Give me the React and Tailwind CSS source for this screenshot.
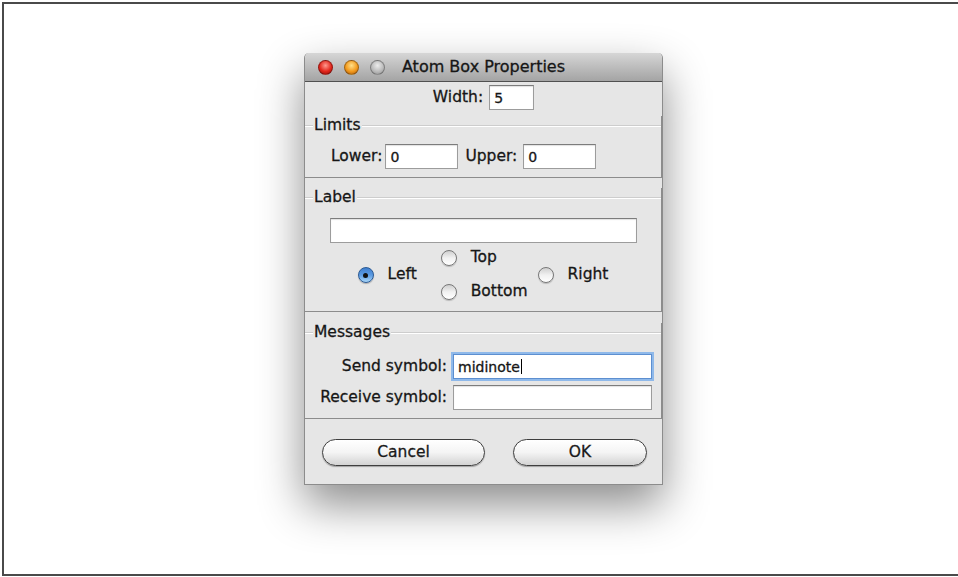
import React from 'react';

const Field = ({ width, children, focused }) => (
  <div
    className={
      'flex h-[25px] items-center bg-white pl-[4px] text-[14px] leading-none ' +
      (focused
        ? 'border border-[#5d8fd0] shadow-[0_0_0_2px_#8fb9ea]'
        : 'border border-[#9c9c9c] border-t-[#7c7c7c] shadow-[inset_0_1px_1px_rgba(0,0,0,0.12)]')
    }
    style={{ width }}
  >
    {children}
  </div>
);

const Radio = ({ checked }) =>
  checked ? (
    <span className="flex h-[16px] w-[16px] shrink-0 items-center justify-center rounded-full border border-[#2b5a94] bg-gradient-to-b from-[#3f7fcf] via-[#5b9ae2] to-[#a9d6f8] shadow-[0_1px_1px_rgba(0,0,0,0.25)]">
      <span className="h-[5px] w-[5px] rounded-full bg-[#111]" />
    </span>
  ) : (
    <span className="h-[16px] w-[16px] shrink-0 rounded-full border border-[#777] bg-gradient-to-b from-[#cfcfcf] via-[#f1f1f1] to-[#ffffff] shadow-[0_1px_1px_rgba(0,0,0,0.2)]" />
  );

const Option = ({ checked, label }) => (
  <div className="flex h-[22px] items-center gap-[14px]">
    <Radio checked={checked} />
    <span>{label}</span>
  </div>
);

// labelframe heading: title with the groove running to the right edge
const GroupTitle = ({ title, className }) => (
  <div className={'flex h-[20px] items-center ' + className}>
    <div className="h-[2px] w-[8px] border-t border-[#cdcdcd] bg-white" />
    <span className="px-[1px]">{title}</span>
    <div className="h-[2px] flex-1 border-t border-[#cdcdcd] bg-white" />
  </div>
);

const Button = ({ width, children }) => (
  <button
    className="flex h-[27px] items-center justify-center rounded-full border border-[#3e3e3e] bg-gradient-to-b from-[#ffffff] via-[#f4f4f4] to-[#d3d3d3] shadow-[0_1px_1px_rgba(0,0,0,0.3)] text-[15.5px] text-[#1a1a1a]"
    style={{ width }}
  >
    {children}
  </button>
);

const Light = ({ className }) => (
  <span className={'h-[15px] w-[15px] rounded-full border border-black/30 ' + className} />
);

export default function App() {
  return (
    <div className="h-[577px] w-[958px] overflow-hidden bg-white font-['DejaVu_Sans',sans-serif] text-[#161616] [-webkit-text-stroke:0.3px_#161616]">
      <div className="ml-[2px] mt-[2px] h-[574px] border-b-2 border-l-2 border-t-2 border-[#4a4a4a] pl-[300px] pt-[49px]">
        <div className="w-[359px] rounded-t-[5px] border-x border-b border-[#8c8c8c] bg-[#e6e6e6] text-[15.5px] shadow-[0_20px_45px_rgba(0,0,0,0.45)]">
          {/* title bar */}
          <div className="grid h-[29px] grid-cols-[1fr_auto_1fr] items-center rounded-t-[5px] border-b border-[#505050] bg-gradient-to-b from-[#d6d6d6] to-[#a4a4a4] text-[16px]">
            <div className="flex items-center gap-[11px] pl-[13px]">
              <Light className="bg-[radial-gradient(circle_at_50%_35%,#ff9a8f,#e3261c_55%,#8c0d08)]" />
              <Light className="bg-[radial-gradient(circle_at_50%_35%,#ffe08a,#f39a1d_55%,#a4560b)]" />
              <Light className="bg-[radial-gradient(circle_at_50%_35%,#ececec,#bcbcbc_55%,#8d8d8d)]" />
            </div>
            <span>Atom Box Properties</span>
            <div />
          </div>

          {/* width */}
          <div className="flex items-center justify-center gap-[6px] pt-[3px]">
            <span>Width:</span>
            <Field width={45}>5</Field>
          </div>

          {/* limits */}
          <div className="border-b border-r border-[#8c8c8c]">
            <GroupTitle title="Limits" className="mt-[6px]" />
            <div className="mt-[8px] flex items-center pb-[8px] pl-[26px]">
              <span>Lower:</span>
              <div className="ml-[3px]">
                <Field width={73}>0</Field>
              </div>
              <span className="ml-[7px]">Upper:</span>
              <div className="ml-[6px]">
                <Field width={73}>0</Field>
              </div>
            </div>
          </div>

          {/* label */}
          <div className="border-b border-r border-[#8c8c8c]">
            <GroupTitle title="Label" className="mt-[10px]" />
            <div className="mt-[10px] flex justify-center">
              <Field width={307} />
            </div>
            <div className="mt-[4px] flex items-center justify-center pb-[8px]">
              <Option checked label="Left" />
              <div className="ml-[24px] flex flex-col gap-[12px]">
                <Option label="Top" />
                <Option label="Bottom" />
              </div>
              <div className="ml-[10px]">
                <Option label="Right" />
              </div>
            </div>
          </div>

          {/* messages */}
          <div className="border-b border-r border-[#8c8c8c]">
            <GroupTitle title="Messages" className="mt-[11px]" />
            <div className="mt-[11px] flex flex-col gap-[6px] pb-[8px] pr-[9px]">
              <div className="flex items-center justify-end gap-[6px]">
                <span>Send symbol:</span>
                <Field width={199} focused>
                  midinote
                  <span className="ml-px h-[15px] w-px bg-black" />
                </Field>
              </div>
              <div className="flex items-center justify-end gap-[6px]">
                <span>Receive symbol:</span>
                <Field width={199} />
              </div>
            </div>
          </div>

          {/* buttons */}
          <div className="flex gap-[28px] pb-[18px] pl-[17px] pt-[20px]">
            <Button width={163}>Cancel</Button>
            <Button width={134}>OK</Button>
          </div>
        </div>
      </div>
    </div>
  );
}
